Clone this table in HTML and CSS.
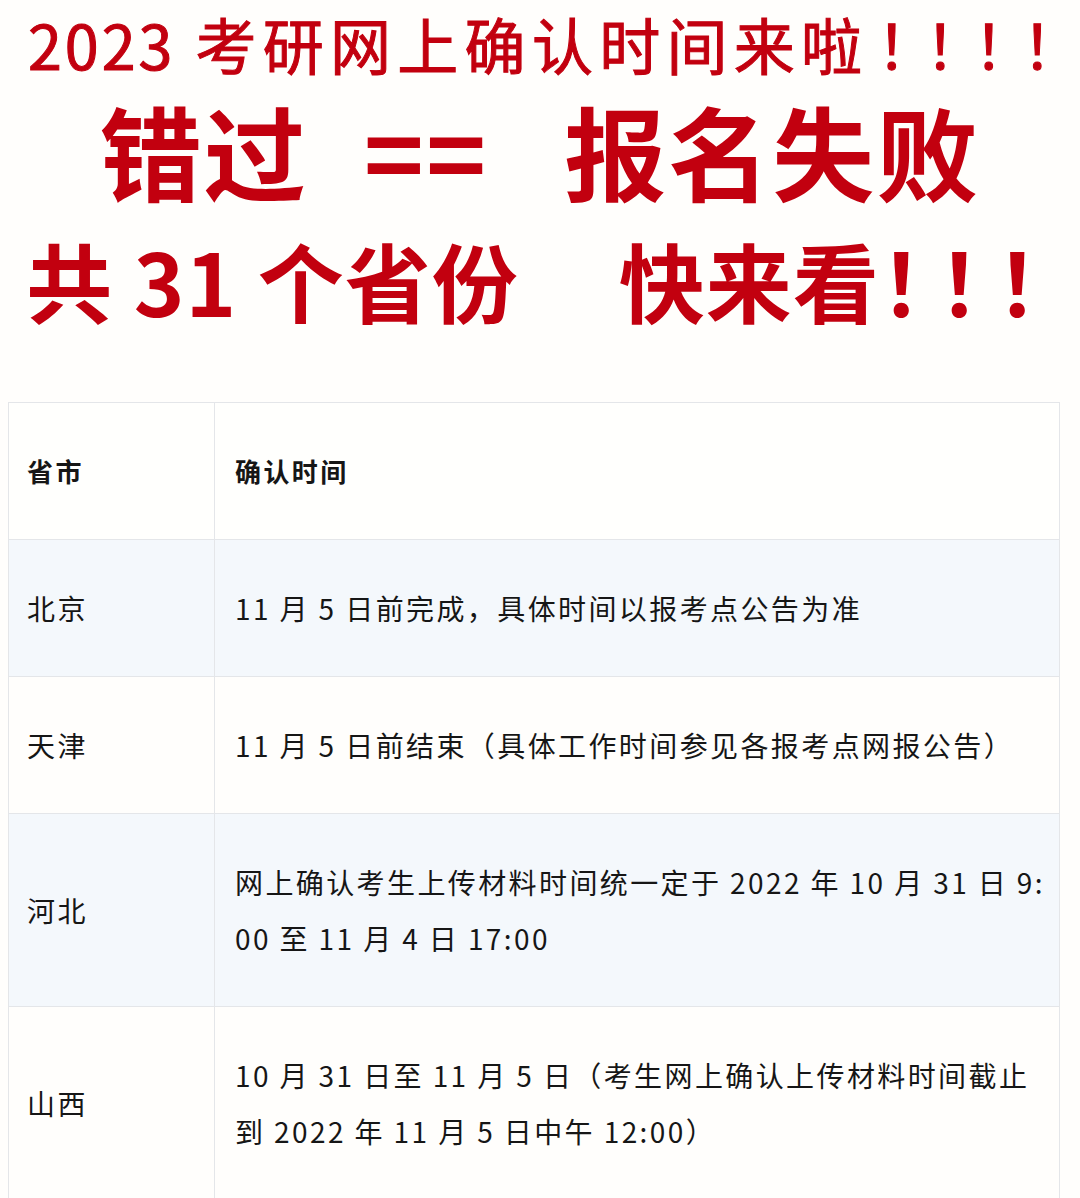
FILE: index.html
```html
<!DOCTYPE html>
<html lang="zh-CN">
<head>
<meta charset="utf-8">
<title>2023 考研网上确认时间</title>
<link rel="stylesheet" href="styles.css">
</head>
<body>
<header class="banner">
  <h1 class="line line-1"><span class="yr">2023</span> 考研网上确认时间来啦<span class="bang">！！！<span class="bang-end">！</span></span></h1>
  <p class="line line-2">错过<span class="gap-a"></span>==<span class="gap-b"></span>报名失败</p>
  <p class="line line-3">共 31 个省份<span class="gap-c"></span>快来看<span class="bang3">！！！</span></p>
</header>
<table class="schedule">
  <colgroup><col class="col-prov"><col class="col-time"></colgroup>
  <thead>
    <tr><th>省市</th><th>确认时间</th></tr>
  </thead>
  <tbody>
    <tr class="alt"><td>北京</td><td>11 月 5 日前完成，具体时间以报考点公告为准</td></tr>
    <tr><td>天津</td><td>11 月 5 日前结束（具体工作时间参见各报考点网报公告）</td></tr>
    <tr class="alt"><td>河北</td><td>网上确认考生上传材料时间统一定于 2022 年 10 月 31 日 9:00 至 11 月 4 日 17:00</td></tr>
    <tr><td>山西</td><td>10 月 31 日至 11 月 5 日（考生网上确认上传材料时间截止到 2022 年 11 月 5 日中午 12:00）</td></tr>
  </tbody>
</table>
</body>
</html>
```
FILE: styles.css
```css
html, body {
  margin: 0;
  padding: 0;
  background: #fffefc;
}
body {
  font-family: "Noto Sans CJK SC", "Noto Sans", sans-serif;
  width: 1080px;
}
.banner {
  display: flex;
  flex-direction: column;
  align-items: center;
  color: #c2000f;
}
.line {
  margin: 0;
  white-space: nowrap;
  font-weight: 700;
}
.line-1 {
  align-self: flex-start;
  padding-left: 28px;
  font-size: 61px;
  font-weight: 400;
  -webkit-text-stroke: 1px #c2000f;
  line-height: 88px;
  letter-spacing: 6.3px;
}
.line-1 .yr {
  letter-spacing: 3px;
}
.line-1 .bang {
  font-feature-settings: "halt";
  margin-left: 8px;
  letter-spacing: 18px;
}
.line-1 .bang-end {
  letter-spacing: 0;
}
.line-2 {
  font-size: 102px;
  line-height: 124px;
  letter-spacing: 2px;
  display: flex;
  align-items: center;
}
.gap-a { display: inline-block; width: 56px; }
.gap-b { display: inline-block; width: 76px; }
.line-3 {
  font-size: 86px;
  line-height: 136px;
  letter-spacing: 1px;
  display: flex;
  align-items: center;
}
.gap-c { display: inline-block; width: 100px; }
.bang3 { letter-spacing: -28px; }

.schedule {
  margin: 54px 0 0 8px;
  width: 1052px;
  border-collapse: collapse;
  table-layout: fixed;
  color: #161616;
  font-size: 28px;
  line-height: 56px;
  letter-spacing: 2.4px;
}
.col-prov { width: 206px; }
.schedule th,
.schedule td {
  border: 1px solid #e4e6e9;
  padding: 40px 12px 40px 18px;
  text-align: left;
  vertical-align: middle;
  word-break: break-all;
}
.schedule td + td,
.schedule th + th {
  padding-left: 20px;
}
.schedule th {
  font-weight: 700;
  font-size: 26px;
  background: #fffffd;
}
.schedule td {
  background: #fffefc;
}
.schedule tr.alt td {
  background: #f4f8fc;
}
```
